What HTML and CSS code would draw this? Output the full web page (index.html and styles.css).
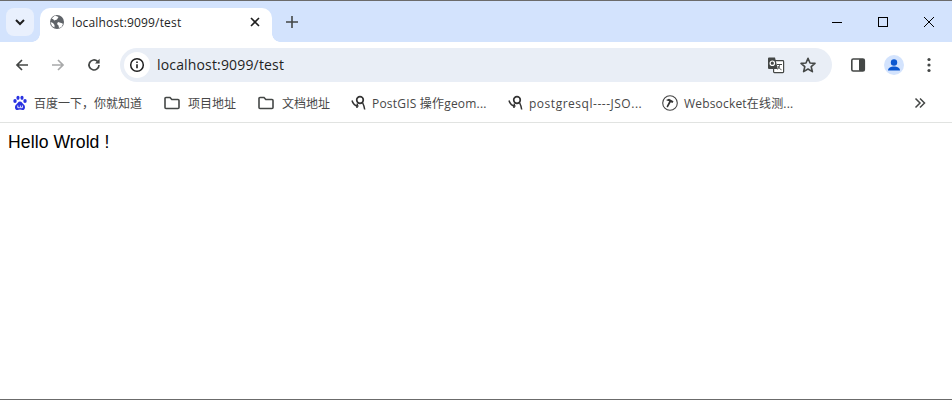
FILE: index.html
```html
<!DOCTYPE html>
<html lang="zh-CN">
<head>
<meta charset="utf-8">
<title>localhost:9099/test</title>
<link rel="stylesheet" href="styles.css">
</head>
<body>
<div class="window">
  <div class="tabstrip">
    <button class="tabsearch">
      <svg width="16" height="16" viewBox="0 0 16 16"><path d="M4 6l4 4 4-4" fill="none" stroke="#1f1f1f" stroke-width="2"/></svg>
    </button>
    <div class="tab">
      <svg class="favicon" width="16" height="16" viewBox="0 0 16 16"><circle cx="8" cy="8" r="7" fill="#5f6368"/><path d="M6 1.500L9.500 3 8 5.500 5.200 6.500 4 5 2.500 4.500zM9 8l4 1.200 1 .8-1.500 3L10 14 9.500 11.500 8 10zM1.500 8L4 9l1.500 2L5.500 13.500 3 12z" fill="#fff"/></svg>
      <span class="tabtitle">localhost:9099/test</span>
      <svg class="tabclose" width="12" height="12" viewBox="0 0 12 12"><path d="M2 2l8 8M10 2l-8 8" stroke="#1f1f1f" stroke-width="1.600" fill="none"/></svg>
    </div>
    <svg class="newtab" width="14" height="14" viewBox="0 0 14 14"><path d="M7 1v12M1 7h12" stroke="#444746" stroke-width="1.600" fill="none"/></svg>
    <div class="caption">
      <svg width="46" height="12" viewBox="0 0 46 12"><path d="M18 6.500h10" stroke="#000" fill="none"/></svg>
      <svg width="46" height="12" viewBox="0 0 46 12"><rect x="18.500" y="1.500" width="9" height="9" stroke="#000" fill="none"/></svg>
      <svg width="46" height="12" viewBox="0 0 46 12"><path d="M18 1l10 10M28 1L18 11" stroke="#000" fill="none"/></svg>
    </div>
  </div>
  <div class="toolbar">
    <svg class="navicon" width="16" height="16" viewBox="0 0 16 16"><path d="M14 8H3M8 3L3 8l5 5" stroke="#444746" stroke-width="1.700" fill="none"/></svg>
    <svg class="navicon" width="16" height="16" viewBox="0 0 16 16"><path d="M2 8h11M8 3l5 5-5 5" stroke="#a8a9aa" stroke-width="1.700" fill="none"/></svg>
    <svg class="navicon" width="16" height="16" viewBox="0 0 16 16"><path d="M13 8a5 5 0 1 1-1.500-3.600" stroke="#444746" stroke-width="1.700" fill="none"/><path d="M13.600 1.800v4.600H9z" fill="#444746"/></svg>
    <div class="omnibox">
      <span class="infochip">
        <svg width="16" height="16" viewBox="0 0 16 16"><circle cx="8" cy="8" r="6.300" fill="none" stroke="#1f1f1f" stroke-width="1.500"/><path d="M8 7.200v4M8 4.500v1.600" stroke="#1f1f1f" stroke-width="1.600"/></svg>
      </span>
      <span class="url">localhost:9099/test</span>
      <svg class="translate" width="18" height="18" viewBox="0 0 18 18"><rect x="6.600" y="4.600" width="10" height="12" rx=".8" fill="#fff" stroke="#444746" stroke-width="1.200"/><path d="M1 2.500a1 1 0 0 1 1-1h6L10.800 13H2a1 1 0 0 1-1-1z" fill="#444746"/><circle cx="5.300" cy="7.200" r="2.200" fill="none" stroke="#fff" stroke-width="1.200"/><path d="M10 8.500h5M12.500 8v1.500c0 1.600-1 3-2 3.800M11 10c.5 1.500 1.800 3 3.500 3.800" fill="none" stroke="#444746"/></svg>
      <svg class="star" width="18" height="18" viewBox="0 0 18 18"><path d="M9 2.300l2 4.700 5 .4-3.800 3.300 1.200 4.900L9 13l-4.400 2.600 1.200-4.900L2 7.400l5-.4z" fill="none" stroke="#444746" stroke-width="1.600" stroke-linejoin="round"/></svg>
    </div>
    <svg class="sidepanel" width="16" height="16" viewBox="0 0 16 16"><rect x="1.800" y="2" width="12.500" height="12" rx="1.500" fill="none" stroke="#444746" stroke-width="1.600"/><rect x="9" y="2" width="5.500" height="12" rx="1" fill="#444746"/></svg>
    <span class="avatar">
      <svg width="20" height="20" viewBox="0 0 20 20"><circle cx="10" cy="10" r="10" fill="#d3e3fd"/><circle cx="10" cy="7.500" r="3.200" fill="#0b57d0"/><path d="M4 15.500c0-2.800 3-4 6-4s6 1.200 6 4z" fill="#0b57d0"/></svg>
    </span>
    <svg class="menu" width="4" height="16" viewBox="0 0 4 16"><circle cx="2" cy="2.500" r="1.600" fill="#444746"/><circle cx="2" cy="8" r="1.600" fill="#444746"/><circle cx="2" cy="13.500" r="1.600" fill="#444746"/></svg>
  </div>
  <div class="bookmarks">
    <a class="bm bm-baidu">
      <svg width="16" height="16" viewBox="0 0 16 16"><g fill="#2932e1"><ellipse cx="3" cy="6" rx="1.700" ry="2.100"/><ellipse cx="6" cy="2.800" rx="1.600" ry="2.100"/><ellipse cx="10" cy="2.800" rx="1.600" ry="2.100"/><ellipse cx="13" cy="6" rx="1.700" ry="2.100"/><path d="M8 6.500c-2 0-2.500 2-4 3.200C2.500 11 2.500 15 5.500 15c1 0 1.500-.4 2.500-.4s1.500.4 2.500.4c3 0 3-4 1.500-5.300C10.500 8.500 10 6.500 8 6.500z"/></g><path d="M5.800 10.500v2.200h2M8.400 10.500v2.200h2v-2.200" fill="none" stroke="#fff" stroke-width=".9"/></svg>
      <span>百度一下，你就知道</span>
    </a>
    <a class="bm bm-folder1">
      <svg width="18" height="16" viewBox="0 0 18 16"><path d="M2 3.500a1 1 0 0 1 1-1h4l1.800 2H15a1 1 0 0 1 1 1v7a1 1 0 0 1-1 1H3a1 1 0 0 1-1-1z" fill="none" stroke="#444746" stroke-width="1.600"/></svg>
      <span>项目地址</span>
    </a>
    <a class="bm bm-folder2">
      <svg width="18" height="16" viewBox="0 0 18 16"><path d="M2 3.500a1 1 0 0 1 1-1h4l1.800 2H15a1 1 0 0 1 1 1v7a1 1 0 0 1-1 1H3a1 1 0 0 1-1-1z" fill="none" stroke="#444746" stroke-width="1.600"/></svg>
      <span>文档地址</span>
    </a>
    <a class="bm bm-postgis">
      <svg width="16" height="16" viewBox="0 0 16 16"><path d="M1 5.500c.8 3 2.500 5.500 6.500 5.500" fill="none" stroke="#333" stroke-width="1.500"/><circle cx="9" cy="5" r="3.300" fill="none" stroke="#333" stroke-width="1.700"/><path d="M6.500 8.500C6 10 5.800 11 6 13M11.500 7.500c1 2 1.800 4.500 2.200 7" fill="none" stroke="#333" stroke-width="1.500"/></svg>
      <span>PostGIS 操作geom...</span>
    </a>
    <a class="bm bm-pg">
      <svg width="16" height="16" viewBox="0 0 16 16"><path d="M1 5.500c.8 3 2.500 5.500 6.500 5.500" fill="none" stroke="#333" stroke-width="1.500"/><circle cx="9" cy="5" r="3.300" fill="none" stroke="#333" stroke-width="1.700"/><path d="M6.500 8.500C6 10 5.800 11 6 13M11.500 7.500c1 2 1.800 4.500 2.200 7" fill="none" stroke="#333" stroke-width="1.500"/></svg>
      <span>postgresql----JSO...</span>
    </a>
    <a class="bm bm-ws">
      <svg width="16" height="16" viewBox="0 0 16 16"><circle cx="8" cy="8" r="7.300" fill="none" stroke="#444" stroke-width="1.100"/><path d="M4 5l3-1.200 4.500 2.500-1 1.800-1.700-.9L5.800 12.500 4.500 11.500 7.200 6.300 5.500 5.800z" fill="#333"/></svg>
      <span>Websocket在线测...</span>
    </a>
    <svg class="more" width="12" height="12" viewBox="0 0 12 12"><path d="M1.500 1.500L6 6l-4.500 4.500M6 1.500L10.500 6 6 10.500" fill="none" stroke="#444746" stroke-width="1.500"/></svg>
  </div>
  <main class="content">Hello Wrold !</main>
</div>
</body>
</html>
```
FILE: styles.css
```css
* { box-sizing: border-box; }
html, body { margin: 0; height: 100%; }
body { background: #fff; overflow: hidden; }
svg { display: block; flex: none; }

.window {
  height: 400px;
  display: flex;
  flex-direction: column;
  border-top: 1px solid #6b6b6b;
  border-bottom: 1px solid #6b6b6b;
  font-family: "Open Sans", "Noto Sans CJK SC", sans-serif;
}

.tabstrip {
  height: 41px;
  flex: none;
  display: flex;
  align-items: flex-start;
  background: #d3e3fd;
  padding: 7px 0 0 6px;
}
.tabsearch {
  width: 28px;
  height: 28px;
  padding: 0;
  border: 0;
  border-radius: 8px;
  background: #e9f0fd;
  display: flex;
  align-items: center;
  justify-content: center;
}
.tab {
  position: relative;
  width: 232px;
  height: 34px;
  margin-left: 6px;
  padding: 0 11px 6px 9px;
  border-radius: 10px 10px 0 0;
  background: #fff;
  display: flex;
  align-items: center;
}
.tab::before, .tab::after {
  content: "";
  position: absolute;
  bottom: 0;
  width: 8px;
  height: 8px;
}
.tab::before {
  left: -8px;
  background: radial-gradient(circle at 0 0, transparent 7.500px, #fff 8px);
}
.tab::after {
  right: -8px;
  background: radial-gradient(circle at 100% 0, transparent 7.500px, #fff 8px);
}
.favicon { margin-right: 7px; }
.tabtitle { flex: 1; font-size: 12px; letter-spacing: .16px; color: #1f1f1f; }
.newtab { margin: 7px 0 0 13px; }
.caption {
  margin-left: auto;
  margin-top: 8px;
  display: flex;
}

.toolbar {
  height: 46px;
  flex: none;
  background: #fff;
  border-radius: 10px 10px 0 0;
  display: flex;
  align-items: center;
  padding: 0 0 0 14px;
}
.navicon { margin-right: 20px; }
.navicon:nth-child(3) { margin-right: 18px; }
.omnibox {
  width: 712px;
  height: 34px;
  border-radius: 17px;
  background: #e9eef6;
  display: flex;
  align-items: center;
  padding: 0 15px 0 4px;
}
.infochip {
  width: 26px;
  height: 26px;
  border-radius: 50%;
  background: #fff;
  display: flex;
  align-items: center;
  justify-content: center;
  margin-right: 7px;
}
.url { flex: 1; font-size: 14px; letter-spacing: .16px; padding-bottom: 1px; color: #1f1f1f; }
.translate { margin-right: 14px; }
.sidepanel { margin-left: 18px; }
.avatar { margin-left: 18px; }
.menu { margin-left: 23px; }

.bookmarks {
  height: 35px;
  flex: none;
  background: #fff;
  border-bottom: 1px solid #e1e3e1;
  display: flex;
  align-items: center;
  padding: 0 0 4px 12px;
}
.bm {
  display: flex;
  align-items: center;
  gap: 6px;
  font-size: 12px;
  color: #474747;
  white-space: nowrap;
}
.bm-baidu { width: 151px; }
.bm-folder1 { width: 94px; gap: 7px; }
.bm-folder2 { width: 94px; gap: 7px; }
.bm-postgis { width: 157px; gap: 5px; letter-spacing: .2px; }
.bm-pg { width: 154px; gap: 5px; letter-spacing: .52px; }
.bm-ws { width: 252px; letter-spacing: .18px; }

.content {
  flex: 1;
  padding: 9px 8px;
  font-family: "Liberation Sans", sans-serif;
  font-size: 17.600px;
  letter-spacing: .08px;
  line-height: 20px;
  color: #000;
}
```
